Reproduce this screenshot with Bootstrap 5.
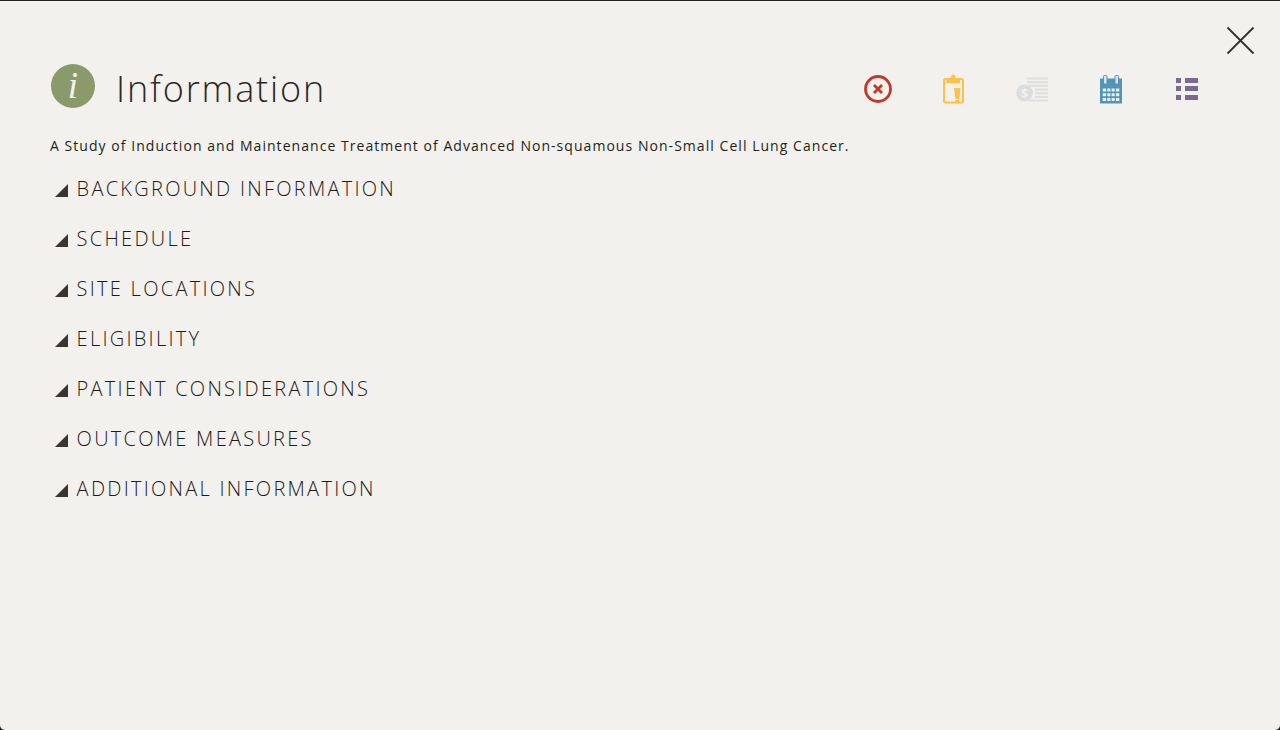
<!DOCTYPE html>
<html lang="en"><head><meta charset="utf-8"><title>Information</title>
<link href="https://cdn.jsdelivr.net/npm/bootstrap@5.3.0/dist/css/bootstrap.min.css" rel="stylesheet">
<style>
html,body{height:100%;margin:0;background:#222}
body{font-family:"Open Sans",sans-serif;color:#33302e;overflow:hidden}
.sheet{height:730px;background:#f2f1ed;border-top:1px solid #222;border-radius:0 0 5px 5px;position:relative;padding:63px 82px 0 50px}
.closer{position:absolute;left:1226px;top:25px;line-height:0;background:none;border:0;padding:0}
.headrow{height:46px}
.infoball{width:44px;height:44px;flex:none;border-radius:50%;background:#8a9a6a;color:#f2f1ed;font:italic 400 37px/44px "Liberation Serif",serif;text-align:center;margin:-3px 0 0 1px}
.headtitle{font-weight:300;font-size:36px;line-height:46px;letter-spacing:1.85px;margin:4px 0 0 21px;color:#2b2826}
.toolset{margin-left:auto;width:334px;padding-top:4px;gap:52px}
.toolslot{line-height:0}
.toolslot-clip{margin-left:-1px}
.toolslot-list{margin-left:2px}
.studyline{font-size:14px;line-height:20px;letter-spacing:1.045px;margin:0;padding-top:26px;color:#231f1c}
.seclist{margin-top:8px}
.secrow{height:50px;padding-left:5px;gap:8.6px}
.wedge{width:13px;height:13px;flex:none;background:#3a3530;clip-path:polygon(100% 0,100% 100%,0 100%);margin-top:3px}
.seclabel{font-weight:300;font-size:20px;line-height:50px;letter-spacing:2.27px;color:#1f1b19}
</style></head><body>
<div class="sheet">
<button class="closer" type="button" aria-label="Close"><svg width="29" height="29" viewBox="0 0 29 29"><path d="M1.500 1.500 27.500 27.500M27.500 1.500 1.500 27.500" stroke="#33302e" stroke-width="1.800" fill="none"/></svg></button>
<div class="headrow d-flex align-items-center">
<div class="infoball">i</div>
<h1 class="headtitle">Information</h1>
<div class="toolset d-flex align-items-center">
<span class="toolslot"><svg width="28" height="28" viewBox="0 0 28 28"><circle cx="14" cy="14" r="12.500" fill="none" stroke="#c0392b" stroke-width="2.800"/><path d="M10 10 18 18M18 10 10 18" stroke="#c0392b" stroke-width="2.800" fill="none"/></svg></span>
<span class="toolslot toolslot-clip"><svg width="21" height="30" viewBox="0 0 21 30"><rect x="1" y="5" width="19" height="23.500" rx="1.500" fill="none" stroke="#fdc048" stroke-width="2"/><path d="M3.500 9V4.500H7.500Q8 .5 10.200 .5T13 4.500H17V9Z" fill="#fdc048"/><path d="M11 14H17.500L16.300 25H12.500Z" fill="#fdc048"/><rect x="12.500" y="25.800" width="3.800" height="3.400" fill="#fdc048"/></svg></span>
<span class="toolslot"><svg width="32" height="25" viewBox="0 0 32 25"><path d="M11 1.500H32M11 5.200H32M11 8.900H32M19 12.600H32M19 16.300H32M19 20H32M12 23.500H32" stroke="#e0e0e0" stroke-width="2.200" fill="none"/><circle cx="8.500" cy="16" r="8.400" fill="#dcdddf"/><text x="8.500" y="20.500" font-family="Open Sans" font-size="12" font-weight="700" fill="#f2f1ed" text-anchor="middle">$</text></svg></span>
<span class="toolslot"><svg width="22" height="29" viewBox="0 0 22 29"><rect y="3.500" width="22" height="25" fill="#5295b4"/><rect x="3.500" y=".5" width="3.500" height="8.500" rx="1" fill="#d5e5ec" stroke="#5295b4"/><rect x="15" y=".5" width="3.500" height="8.500" rx="1" fill="#d5e5ec" stroke="#5295b4"/><path d="M2.700 15H19.300M2.700 19.700H19.300M2.700 24.400H19.300" stroke="#e8f0f2" stroke-width="3" fill="none"/><path d="M6.700 12V26.500M11 12V26.500M15.300 12V26.500" stroke="#5295b4" stroke-width="1.200" fill="none"/></svg></span>
<span class="toolslot toolslot-list"><svg width="22" height="23" viewBox="0 0 22 23"><path d="M0 0H5V5H0ZM0 8H5V13H0ZM0 17H5V22H0ZM9 0H22V5H9ZM9 8H22V13H9ZM9 17H22V22H9Z" fill="#7a6a92"/></svg></span>
</div>
</div>
<p class="studyline">A Study of Induction and Maintenance Treatment of Advanced Non-squamous Non-Small Cell Lung Cancer.</p>
<div class="seclist">
<div class="secrow d-flex align-items-center"><span class="wedge"></span><span class="seclabel">BACKGROUND INFORMATION</span></div>
<div class="secrow d-flex align-items-center"><span class="wedge"></span><span class="seclabel">SCHEDULE</span></div>
<div class="secrow d-flex align-items-center"><span class="wedge"></span><span class="seclabel">SITE LOCATIONS</span></div>
<div class="secrow d-flex align-items-center"><span class="wedge"></span><span class="seclabel">ELIGIBILITY</span></div>
<div class="secrow d-flex align-items-center"><span class="wedge"></span><span class="seclabel">PATIENT CONSIDERATIONS</span></div>
<div class="secrow d-flex align-items-center"><span class="wedge"></span><span class="seclabel">OUTCOME MEASURES</span></div>
<div class="secrow d-flex align-items-center"><span class="wedge"></span><span class="seclabel">ADDITIONAL INFORMATION</span></div>
</div>
</div>
<script src="https://cdn.jsdelivr.net/npm/bootstrap@5.3.0/dist/js/bootstrap.bundle.min.js"></script>
</body></html>
